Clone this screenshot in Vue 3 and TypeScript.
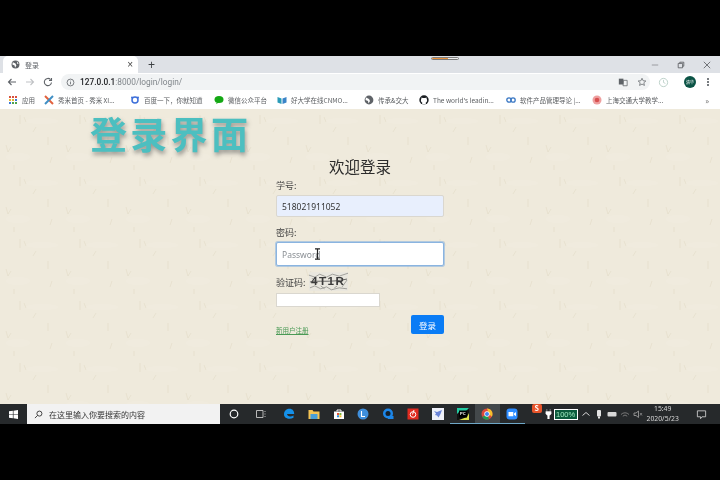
<template>
  <div class="screen">
    <div class="tabstrip">
      <div class="tab">
        <svg class="tab-fav" viewBox="0 0 10 10"><circle cx="5" cy="5" r="4.4" fill="#5f6368" /><path d="M2 2.500l3 1.500 1 2-1.500 2.500-.5-2.500-2.500-1zM6.500 1.500l2 2.500-1.500.5z" fill="#fff" /></svg>
        <span class="tab-title">登录</span>
        <span class="tab-close">×</span>
      </div>
      <span class="tab-new">+</span>
      <div class="share-pill"><span class="share-fill"></span></div>
      <div class="winctl">
        <svg viewBox="0 0 10 10"><path d="M1 5h8" stroke="#8a8c90" stroke-width="1" /></svg>
        <svg viewBox="0 0 10 10"><path d="M1.500 3h5.500v5.500h-5.500zM3.500 3v-1.500h5v5h-1.500" fill="none" stroke="#55585c" stroke-width="1" /></svg>
        <svg viewBox="0 0 10 10"><path d="M1 1l8 8M9 1l-8 8" stroke="#55585c" stroke-width="1" /></svg>
      </div>
    </div>

    <div class="toolbar">
      <svg class="nav" viewBox="0 0 10 10"><path d="M9 5H1.500M4.500 2L1.500 5l3 3" fill="none" stroke="#5f6368" stroke-width="1.100" /></svg>
      <svg class="nav" viewBox="0 0 10 10"><path d="M1 5h7.500M5.500 2l3 3-3 3" fill="none" stroke="#c0c2c5" stroke-width="1.100" /></svg>
      <svg class="nav" viewBox="0 0 10 10"><path d="M8.500 5.500A3.600 3.600 0 1 1 7.600 2.600M8.500 1v2.500H6" fill="none" stroke="#5f6368" stroke-width="1.100" /></svg>
      <div class="omnibox">
        <svg class="info" viewBox="0 0 10 10"><circle cx="5" cy="5" r="3.800" fill="none" stroke="#5f6368" stroke-width=".9" /><path d="M5 4.500v2.500M5 3v.8" stroke="#5f6368" stroke-width=".9" /></svg>
        <span class="url"><b>127.0.0.1</b>:8000/login/login/</span>
        <svg class="omni-icon" viewBox="0 0 12 12"><path d="M1 2h5.500v7H1z" fill="#5f6368" /><path d="M6.500 4H11v6.500H6z" fill="none" stroke="#5f6368" stroke-width=".9" /></svg>
        <svg class="omni-icon" viewBox="0 0 12 12"><path d="M6 1.500l1.400 3 3.200.3-2.400 2.100.7 3.200L6 8.500l-2.900 1.600.7-3.200-2.400-2.100 3.200-.3z" fill="none" stroke="#5f6368" stroke-width=".9" /></svg>
      </div>
      <svg class="clock" viewBox="0 0 12 12"><circle cx="6" cy="6" r="4.500" fill="none" stroke="#b9cfc6" stroke-width="1" /><path d="M6 3.200V6l2 1" fill="none" stroke="#b9cfc6" stroke-width=".9" /></svg>
      <span class="avatar">清华</span>
      <span class="dots"><i></i><i></i><i></i></span>
    </div>

    <div class="bookmarks">
      <div v-for="b in bookmarks" :key="b.label" class="bm" :style="{ width: b.w + 'px' }">
        <svg viewBox="0 0 10 10" class="bm-icon" v-html="b.icon"></svg>
        <span class="bm-text">{{ b.label }}</span>
      </div>
      <span class="bm-more">»</span>
    </div>

    <main class="page">
      <h1 class="banner">登录界面</h1>
      <form class="login" @submit.prevent>
        <h2 class="welcome">欢迎登录</h2>
        <label class="lbl">学号:</label>
        <input class="field filled" value="518021911052" />
        <label class="lbl pw">密码:</label>
        <div class="pw-wrap">
          <input class="field focus" placeholder="Password" />
          <svg class="ibeam" viewBox="0 0 7 12"><path d="M1 .8h5M1 11.200h5M3.500 .8v10.400" stroke="#222" stroke-width="1.200" fill="none" /></svg>
        </div>
        <div class="captcha-row">
          <label class="lbl cap">验证码:</label>
          <svg class="captcha" viewBox="0 0 40 19">
            <rect width="40" height="19" fill="#e9e7df" />
            <path d="M0 3l6 2 5-3 7 3 6-3 7 2 9-3M1 16l5-2 6 3 6-2 5 3 8-2 8 1M3 6l3 3M34 15l5-7M12 14l4 3M26 16l3-2" stroke="#8d8d88" stroke-width=".8" fill="none" />
            <text x="2" y="13" class="cap-text">4T1R</text>
            <path d="M1 10c8-2 20 1 38-3" stroke="#444" stroke-width=".8" fill="none" />
          </svg>
        </div>
        <input class="field small" />
        <div class="actions">
          <a class="signup">新用户注册</a>
          <button class="submit" type="button">登录</button>
        </div>
      </form>
    </main>

    <div class="taskbar">
      <svg class="start" viewBox="0 0 10 10"><path d="M0 1.500l4.300-.7v3.900H0zM5 .7L10 0v4.700H5zM0 5.300h4.300v3.900L0 8.500zM5 5.300h5V10l-5-.7z" fill="#fff" /></svg>
      <div class="search">
        <svg viewBox="0 0 10 10"><circle cx="6" cy="4" r="2.800" fill="none" stroke="#333" /><path d="M4 6L1 9" stroke="#333" /></svg>
        <span>在这里输入你要搜索的内容</span>
      </div>
      <div class="task-icons">
        <span class="ti cortana"><svg viewBox="0 0 12 12"><circle cx="6" cy="6" r="3.800" fill="none" stroke="#fff" stroke-width="1.200" /></svg></span>
        <span class="ti taskview"><svg viewBox="0 0 12 12"><path d="M1.500 2.500h6.500v7H1.500zM10 3v1M10 5.500v1M10 8v1" fill="none" stroke="#c8c8c8" stroke-width=".9" /></svg></span>
        <span class="ti"><svg viewBox="0 0 12 12"><path d="M1 6.500C1 2.500 4 .8 6.500.8c3 0 4.700 2.200 4.700 5.200H4c.2 2.700 4 3 6.500 1.500v2.300C6.500 11.800 1 10.500 1 6.500z" fill="#1590e8" /></svg></span>
        <span class="ti"><svg viewBox="0 0 12 12"><path d="M.5 2h4l1 1.500h6V11H.5z" fill="#f3c354" /><path d="M2.500 6h7v5h-7z" fill="#4a9fd8" /></svg></span>
        <span class="ti"><svg viewBox="0 0 12 12"><path d="M1 3.500h10V11H1z" fill="#fff" /><path d="M4 3.500V2h4v1.500" fill="none" stroke="#fff" /><path d="M4 5h2v2H4z" fill="#e8533a" /><path d="M6.400 5h2v2h-2z" fill="#7db83a" /><path d="M4 7.300h2v2H4z" fill="#2a8fe0" /><path d="M6.400 7.300h2v2h-2z" fill="#f5bf2e" /></svg></span>
        <span class="ti"><svg viewBox="0 0 12 12"><circle cx="6" cy="6" r="5.500" fill="#3f8fdc" /><path d="M4.500 3v5.500h3.500" fill="none" stroke="#fff" stroke-width="1.100" /></svg></span>
        <span class="ti"><svg viewBox="0 0 12 12"><circle cx="6" cy="5.500" r="5" fill="#1c86e8" /><circle cx="6" cy="5.500" r="2.500" fill="#14202c" /><path d="M6 8h5.500v3H6z" fill="#1c86e8" /></svg></span>
        <span class="ti"><svg viewBox="0 0 12 12"><rect x=".5" y=".5" width="11" height="11" fill="#e02b20" /><circle cx="6" cy="6.500" r="2.800" fill="none" stroke="#fff" stroke-width="1" /><path d="M7 2L5.500 6.500" stroke="#fff" /></svg></span>
        <span class="ti"><svg viewBox="0 0 12 12"><rect width="12" height="12" fill="#eef0f8" /><path d="M2 3l3 1 5-2-1.500 4-2 3.500-1.500-2-2-.5 1-1.500z" fill="#6a84d8" /></svg></span>
        <span class="ti under"><svg viewBox="0 0 12 12"><rect width="12" height="12" fill="#111" /><path d="M0 0h12L9 3H3L0 6z" fill="#21c9a0" /><path d="M12 12H2l8-3 2-4z" fill="#e0e24a" /><rect x="2" y="2.500" width="8" height="7" fill="#000" /><text x="3" y="7" class="pc">PC</text></svg></span>
        <span class="ti under active"><svg viewBox="0 0 12 12"><circle cx="6" cy="6" r="5.500" fill="#dd4a3d" /><path d="M6 6L1.300 9A5.500 5.500 0 0 0 8 11.100z" fill="#1f9d55" /><path d="M6 .5a5.500 5.500 0 0 1 4.800 8.200L8 6z" fill="#f6c02d" /><circle cx="6" cy="6" r="2.700" fill="#fff" /><circle cx="6" cy="6" r="2" fill="#4285f4" /></svg></span>
        <span class="ti under"><svg viewBox="0 0 12 12"><rect x=".5" y=".5" width="11" height="11" rx="3" fill="#2d8cff" /><path d="M2.500 4h4.800v4.200H2.500zM8 5.500L10 4v4.200L8 6.800z" fill="#fff" /></svg></span>
      </div>
      <div class="tray">
        <span class="sogou">S</span>
        <svg class="plug" viewBox="0 0 8 12"><path d="M2 0v3M6 0v3M.8 3h6.400v3L5 8v4H3V8L.8 6z" fill="#fff" stroke="#fff" stroke-width=".5" /></svg>
        <span class="battery">100%</span>
        <svg class="tr" viewBox="0 0 10 10"><path d="M1.500 6.500L5 3.500l3.500 3" fill="none" stroke="#d4d4d4" /></svg>
        <svg class="tr" viewBox="0 0 10 10"><rect x="3" y="1" width="4" height="6.500" rx="1" fill="#e4e4e4" /><path d="M4 7.500h2V9.500H4z" fill="#e4e4e4" /></svg>
        <svg class="tr" viewBox="0 0 10 10"><rect x=".5" y="3" width="9" height="4.500" rx="1" fill="#d8d8d8" /></svg>
        <svg class="tr" viewBox="0 0 10 10"><path d="M1 5.500a5.500 5.500 0 0 1 8 0M2.800 7.200a3 3 0 0 1 4.400 0" fill="none" stroke="#777" /></svg>
        <svg class="tr" viewBox="0 0 10 10"><path d="M1 4h2l2.500-2v6.500L3 6.500H1z" fill="none" stroke="#999" stroke-width=".9" /><path d="M7 4l2 2.500M9 4L7 6.500" stroke="#999" stroke-width=".7" /></svg>
        <div class="datetime"><span>15:49</span><span>2020/5/23</span></div>
        <svg class="notif" viewBox="0 0 12 12"><path d="M1.500 2h9v6.500H6.500l-1.500 2v-2H1.500z" fill="none" stroke="#d8d8d8" stroke-width=".9" /></svg>
      </div>
    </div>
  </div>
</template>

<script setup lang="ts">
const bookmarks = [
  { label: '应用', w: 36, icon: '<path d="M1 1h2v2H1zM4 1h2v2H4zM7 1h2v2H7z" fill="#d9503f"/><path d="M1 4h2v2H1zM4 4h2v2H4z" fill="#e8b32c"/><path d="M7 4h2v2H7zM1 7h2v2H1z" fill="#3c78d8"/><path d="M4 7h2v2H4zM7 7h2v2H7z" fill="#4ea24e"/>' },
  { label: '秀米首页 - 秀米 XI...', w: 86, icon: '<path d="M1 1l8 8" stroke="#e2603c" stroke-width="2"/><path d="M9 1L1 9" stroke="#3f8fc4" stroke-width="2"/>' },
  { label: '百度一下，你就知道', w: 84, icon: '<circle cx="5" cy="5" r="3" fill="none" stroke="#3d6fd9" stroke-width="1.500"/><circle cx="2" cy="2.500" r="1" fill="#3d6fd9"/><circle cx="8" cy="2.500" r="1" fill="#3d6fd9"/>' },
  { label: '微信公众平台', w: 63, icon: '<ellipse cx="5" cy="4.500" rx="4.500" ry="3.500" fill="#14a814"/><path d="M3 7l-1 2 3-1.500z" fill="#14a814"/>' },
  { label: '好大学在线CNMO...', w: 87, icon: '<path d="M.5 2l4 1.500V9l-4-1.500z" fill="#2a9bb8"/><path d="M9.500 2l-4 1.500V9l4-1.500z" fill="#3a84c8"/>' },
  { label: '传承&交大', w: 55, icon: '<circle cx="5" cy="5" r="4.400" fill="#5f6368"/><path d="M2 2.500l3 1.500 1 2-1.500 2.500-.5-2.500-2.500-1z" fill="#fff"/>' },
  { label: 'The world\'s leadin...', w: 87, icon: '<circle cx="5" cy="5" r="4.700" fill="#1b1f23"/><path d="M3.200 9.500V7.500c-.8-.4-1.300-1.200-1.300-2.300 0-.5.200-1 .5-1.400-.1-.4 0-.9.100-1.200.5 0 1 .2 1.300.5a4 4 0 0 1 2.400 0c.3-.3.800-.5 1.300-.5.100.3.200.8.100 1.200.3.400.5.900.5 1.400 0 1.100-.5 1.900-1.300 2.300v2z" fill="#fff"/>' },
  { label: '软件产品管理导论 |...', w: 86, icon: '<circle cx="3" cy="5" r="2.200" fill="none" stroke="#3b78c4" stroke-width="1.300"/><circle cx="7" cy="5" r="2.200" fill="none" stroke="#3b78c4" stroke-width="1.300"/>' },
  { label: '上海交通大学教学...', w: 84, icon: '<circle cx="5" cy="5" r="4.500" fill="#eea0a0"/><circle cx="5" cy="5" r="2.300" fill="#d85050"/>' },
]
</script>

<style>
body {
  background: #000;
}
</style>

<style scoped>
.screen {
  width: 720px;
  height: 480px;
  padding: 56px 0;
  box-sizing: border-box;
  display: flex;
  flex-direction: column;
  background: #000;
  font-family: "Noto Sans CJK SC", "Noto Sans", sans-serif;
  overflow: hidden;
  filter: blur(0.35px);
}
svg {
  display: block;
  flex: none;
}

.tabstrip {
  height: 17px;
  flex: none;
  display: flex;
  align-items: center;
  background: #dee1e6;
  padding-left: 3px;
  position: relative;
}
.tab {
  width: 135px;
  height: 17px;
  background: #fff;
  border-radius: 5px 5px 0 0;
  display: flex;
  align-items: center;
  padding: 0 4px 0 8px;
  box-sizing: border-box;
}
.tab-fav {
  width: 9px;
  height: 9px;
}
.tab-title {
  margin-left: 5px;
  font-size: 7px;
  color: #5f6368;
}
.tab-close {
  margin-left: auto;
  margin-right: 1px;
  font-size: 10px;
  color: #444;
  font-family: "Liberation Sans", sans-serif;
}
.tab-new {
  margin-left: 10px;
  font-size: 12px;
  line-height: 12px;
  color: #3c4043;
  font-family: "Liberation Sans", sans-serif;
}
.share-pill {
  position: absolute;
  left: 431px;
  top: 1px;
  width: 28px;
  height: 3px;
  border-radius: 2px;
  border: 1px solid #7c7c7c;
  box-sizing: border-box;
  background: #eee;
  overflow: hidden;
}
.share-fill {
  display: block;
  width: 60%;
  height: 100%;
  background: #e8923c;
}
.winctl {
  margin-left: auto;
  display: flex;
  gap: 18px;
  padding-right: 9px;
}
.winctl svg {
  width: 8px;
  height: 8px;
}

.toolbar {
  height: 18px;
  flex: none;
  display: flex;
  align-items: center;
  background: #fff;
  padding-left: 7px;
  padding-right: 10px;
}
.nav {
  width: 10px;
  height: 10px;
  margin-right: 8px;
}
.omnibox {
  width: 589px;
  height: 16px;
  border-radius: 8px;
  background: #f1f3f4;
  display: flex;
  align-items: center;
  padding: 0 3px 0 5px;
  box-sizing: border-box;
}
.info {
  width: 9px;
  height: 9px;
}
.url {
  margin-left: 5px;
  font-size: 8.300px;
  color: #80868b;
  font-family: "Roboto", sans-serif;
}
.url b {
  font-weight: 500;
  color: #202124;
}
.omni-icon {
  width: 10px;
  height: 10px;
  margin-left: 9px;
}
.url + .omni-icon {
  margin-left: auto;
}
.clock {
  width: 11px;
  height: 11px;
  margin-left: 8px;
}
.avatar {
  width: 12px;
  height: 12px;
  margin-left: 15px;
  border-radius: 50%;
  background: #0b5345;
  color: #fff;
  font-size: 4px;
  line-height: 12px;
  text-align: center;
}
.dots {
  margin-left: 11px;
  display: flex;
  flex-direction: column;
  gap: 1.500px;
}
.dots i {
  width: 1.500px;
  height: 1.500px;
  border-radius: 50%;
  background: #5f6368;
}

.bookmarks {
  height: 18px;
  flex: none;
  display: flex;
  align-items: center;
  background: #fff;
  padding-left: 8px;
  position: relative;
}
.bm {
  display: flex;
  align-items: center;
  gap: 4px;
  flex: none;
  overflow: hidden;
}
.bm-icon {
  width: 10px;
  height: 10px;
}
.bm-text {
  font-size: 6.500px;
  color: #5a5d60;
  white-space: nowrap;
}
.bm-more {
  margin-left: auto;
  margin-right: 11px;
  font-size: 8px;
  color: #666;
}

.page {
  flex: 1;
  background-color: #efeadc;
  /* paper fibre marks, repeats every 60px like the original wallpaper */
  background-image: url("data:image/svg+xml,%3Csvg xmlns='http://www.w3.org/2000/svg' width='60' height='62'%3E%3Cg fill='none' stroke='%23d8cdb4' stroke-width='1' stroke-opacity='.3'%3E%3Cpath d='M20 6v9M24 8l2 5M6 36l2 7 3-5M48 28v8M52 48l-2 6M36 18l-3 5M14 56v5'/%3E%3C/g%3E%3Cg fill='%23fff' fill-opacity='.07'%3E%3Cellipse cx='42' cy='12' rx='16' ry='3'/%3E%3Cellipse cx='18' cy='48' rx='12' ry='4'/%3E%3C/g%3E%3C/svg%3E");
  background-size: 60px 62px;
  position: relative;
}
.banner {
  margin: 0 0 0 90px;
  font-size: 37px;
  line-height: 48px;
  height: 50px;
  font-weight: 700;
  letter-spacing: 3.300px;
  color: #4cbfc0;
  text-shadow: 1px 3px 4px rgba(70, 70, 70, 0.5);
  white-space: nowrap;
}
.login {
  width: 168px;
  margin: -3px auto 0;
  display: flex;
  flex-direction: column;
  color: #333;
}
.welcome {
  margin: 0 0 2px;
  font-size: 15.500px;
  line-height: 21px;
  font-weight: 400;
  text-align: center;
  color: #2d2d2d;
}
.lbl {
  font-size: 9px;
  line-height: 13px;
  color: #444;
}
.pw {
  margin-top: 9px;
}
.field {
  display: block;
  box-sizing: border-box;
  width: 168px;
  height: 22px;
  margin-top: 3px;
  padding: 0 5px;
  border: 1px solid #dad7cf;
  border-radius: 2px;
  background: #fff;
  font-family: "Noto Sans", sans-serif;
  font-size: 8.500px;
  color: #333;
  outline: none;
}
.filled {
  background: #e8effd;
}
.focus {
  height: 24px;
  border-color: #8ab4e0;
  box-shadow: 0 0 0 1px rgba(130, 175, 225, 0.55);
}
.focus::placeholder {
  color: #8a8f94;
}
.pw-wrap {
  position: relative;
}
.ibeam {
  position: absolute;
  left: 38px;
  top: 9px;
  width: 7px;
  height: 12px;
}
.captcha-row {
  display: flex;
  align-items: flex-end;
  margin-top: 6px;
  height: 19px;
}
.cap {
  margin-right: 3px;
  margin-bottom: 2px;
}
.captcha {
  width: 39px;
  height: 19px;
}
.cap-text {
  font-family: "Liberation Sans", sans-serif;
  font-size: 12px;
  font-weight: 700;
  letter-spacing: 1.500px;
  fill: #3a3a3a;
}
.small {
  width: 104px;
  height: 14px;
  margin-top: 2px;
  border-radius: 0;
}
.actions {
  display: flex;
  justify-content: space-between;
  align-items: flex-end;
  margin-top: 8px;
}
.signup {
  font-size: 6.500px;
  line-height: 8px;
  color: #4a9a55;
  text-decoration: underline;
}
.submit {
  width: 33px;
  height: 19px;
  padding: 0;
  border: none;
  border-radius: 2px;
  background: #0a7cf5;
  color: #fff;
  font-family: inherit;
  font-size: 8.500px;
}

.taskbar {
  height: 20px;
  flex: none;
  display: flex;
  align-items: center;
  background: #26292b;
  position: relative;
}
.start {
  width: 9px;
  height: 9px;
  margin-left: 9px;
}
.search {
  width: 193px;
  height: 20px;
  margin-left: 9px;
  background: #f2f2f2;
  display: flex;
  align-items: center;
  gap: 6px;
  padding-left: 7px;
  box-sizing: border-box;
  font-size: 8px;
  color: #333;
}
.search svg {
  width: 9px;
  height: 9px;
}
.task-icons {
  display: flex;
  margin-left: 2px;
}
.ti {
  width: 24.800px;
  height: 20px;
  display: flex;
  align-items: center;
  justify-content: center;
  box-sizing: border-box;
}
.ti svg {
  width: 12px;
  height: 12px;
}
.cortana {
  margin-right: 2px;
}
.taskview {
  margin-right: 3px;
}
.under {
  border-bottom: 1px solid #6fa8c8;
}
.active {
  background: #43484b;
}
.pc {
  font-family: "Liberation Sans", sans-serif;
  font-size: 4px;
  font-weight: 700;
  fill: #fff;
}
.tray {
  display: flex;
  align-items: center;
  margin-left: 4px;
  height: 20px;
  flex: 1;
  position: relative;
}
.sogou {
  position: absolute;
  left: 3px;
  top: 0;
  width: 10px;
  height: 9px;
  background: #e8552b;
  color: #fff;
  font-size: 7px;
  line-height: 9px;
  font-weight: 700;
  text-align: center;
  border-radius: 2px;
}
.plug {
  width: 7px;
  height: 10px;
  margin-left: 16px;
}
.battery {
  width: 24px;
  height: 11px;
  margin-left: 2px;
  border: 1px solid #fff;
  box-sizing: border-box;
  background: #0b5a3c;
  color: #9fe8bf;
  font-family: "Liberation Sans", sans-serif;
  font-size: 7.500px;
  line-height: 9px;
  text-align: center;
}
.tr {
  width: 10px;
  height: 10px;
  margin-left: 3px;
}
.datetime {
  margin-left: 4px;
  display: flex;
  flex-direction: column;
  align-items: center;
  font-family: "Noto Sans", sans-serif;
  font-size: 6.800px;
  line-height: 10px;
  color: #d6d6d6;
}
.notif {
  width: 11px;
  height: 11px;
  margin-left: 17px;
}
</style>
